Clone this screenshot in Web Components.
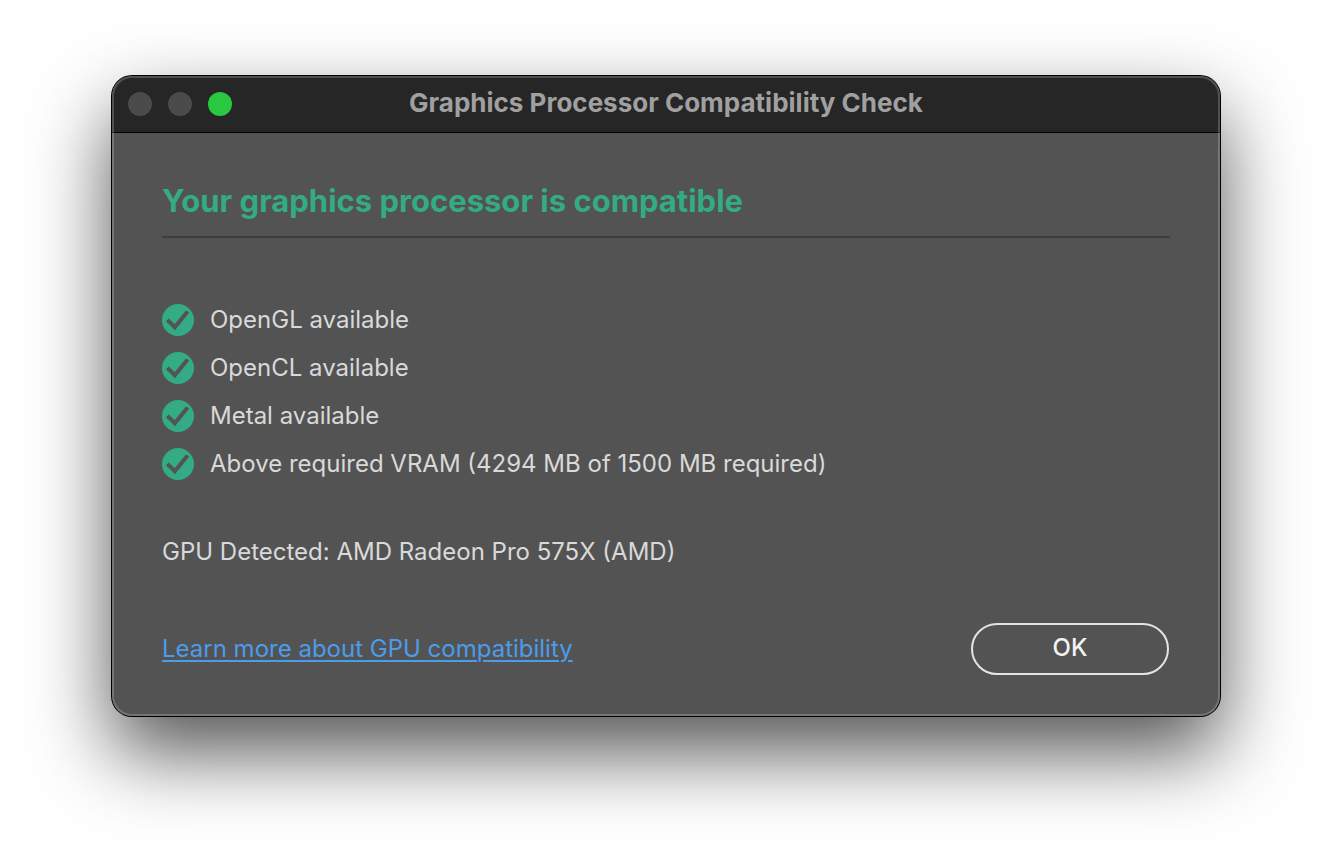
<!DOCTYPE html>
<html lang="en">
<head>
<meta charset="utf-8">
<meta name="viewport" content="width=device-width, initial-scale=1">
<title>Graphics Processor Compatibility Check</title>
<style>
  * { box-sizing: border-box; }
  body {
    margin: 0;
    padding: 76px 112px 148px;
    background: #fff;
    font-family: Inter, "Liberation Sans", sans-serif;
    overflow-x: hidden;
  }
</style>
</head>
<body>

<dialog-window>
  <span slot="title">Graphics Processor Compatibility Check</span>
  <status-heading>Your graphics processor is compatible</status-heading>
  <check-list>
    <check-item>OpenGL available</check-item>
    <check-item>OpenCL available</check-item>
    <check-item>Metal available</check-item>
    <check-item>Above required VRAM (4294 MB of 1500 MB required)</check-item>
  </check-list>
  <gpu-info>GPU Detected: AMD Radeon Pro 575X (AMD)</gpu-info>
  <help-link slot="footer" href="#gpu">Learn more about GPU compatibility</help-link>
  <pill-button slot="footer">OK</pill-button>
</dialog-window>

<script>
// Shared base: stamps the static template of the class into an open shadow root
class BaseElement extends HTMLElement {
  constructor() {
    super();
    this.attachShadow({ mode: 'open' }).innerHTML = this.constructor.template;
  }
}

class DialogWindow extends BaseElement {
  static template = `
    <style>
      :host {
        display: block;
        position: relative;
        border-radius: 20px;
        background: #535353;
        color: #d9d9d9;
        box-shadow: 0 0 0 1px #000, 0 36px 80px rgba(0, 0, 0, 0.68);
      }
      /* light rim, drawn above the title bar and the body */
      :host::after {
        content: '';
        position: absolute;
        inset: 0;
        border-radius: inherit;
        box-shadow: inset 0 0 0 2px rgba(255, 255, 255, 0.2);
        pointer-events: none;
      }
      header {
        display: grid;
        grid-template-columns: 1fr auto 1fr;
        align-items: center;
        height: 57px;
        padding: 0 16px;
        border-bottom: 1px solid #000;
        border-radius: 20px 20px 0 0;
        background: #262626;
        box-sizing: border-box;
      }
      h1 {
        margin: 0;
        padding-bottom: 2px;
        color: #a0a0a0;
        font-size: 26px;
        line-height: 32px;
        font-weight: 700;
      }
      main { padding: 48px 50px 0; }
      footer {
        display: flex;
        align-items: center;
        justify-content: space-between;
        padding: 55px 51px 41px 50px;
      }
    </style>
    <header>
      <traffic-lights></traffic-lights>
      <h1><slot name="title"></slot></h1>
    </header>
    <main><slot></slot></main>
    <footer><slot name="footer"></slot></footer>
  `;
}

class TrafficLights extends BaseElement {
  static template = `
    <style>
      :host { display: flex; gap: 16px; }
      button {
        width: 24px;
        height: 24px;
        padding: 0;
        border: 0;
        border-radius: 50%;
        background: #4b4b4b;
      }
      .zoom { background: #28c840; }
    </style>
    <button type="button" aria-label="Close" disabled></button>
    <button type="button" aria-label="Minimize" disabled></button>
    <button type="button" class="zoom" aria-label="Zoom"></button>
  `;
}

class StatusHeading extends BaseElement {
  static template = `
    <style>
      :host { display: block; border-bottom: 2px solid #3e3e3e; }
      h2 {
        margin: 0;
        padding-bottom: 15px;
        color: #33ab84;
        font-size: 31px;
        line-height: 40px;
        font-weight: 700;
      }
    </style>
    <h2><slot></slot></h2>
  `;
}

class CheckList extends BaseElement {
  static template = `
    <style>
      :host { display: flex; flex-direction: column; gap: 16px; margin-top: 66px; }
    </style>
    <slot></slot>
  `;

  connectedCallback() { this.setAttribute('role', 'list'); }
}

class CheckItem extends BaseElement {
  static template = `
    <style>
      :host {
        display: flex;
        align-items: center;
        gap: 16px;
        font-size: 24px;
        line-height: 32px;
      }
      svg { flex: none; width: 32px; height: 32px; }
    </style>
    <svg viewBox="0 0 32 32" aria-hidden="true">
      <circle cx="16" cy="16" r="16" fill="#33ab84"/>
      <path d="M5.4 15.8 12.8 23.2 25.6 7.4" fill="none" stroke="#535353" stroke-width="4"/>
    </svg>
    <span><slot></slot></span>
  `;

  connectedCallback() { this.setAttribute('role', 'listitem'); }
}

class GpuInfo extends BaseElement {
  static template = `
    <style>
      :host { display: block; margin-top: 56px; font-size: 24px; line-height: 32px; }
      p { margin: 0; }
    </style>
    <p><slot></slot></p>
  `;
}

class HelpLink extends BaseElement {
  static template = `
    <style>
      :host { display: block; font-size: 24px; line-height: 32px; }
      a {
        color: #4b9cea;
        text-decoration-thickness: 2px;
        text-underline-offset: 3px;
      }
    </style>
    <a><slot></slot></a>
  `;

  connectedCallback() {
    this.shadowRoot.querySelector('a').href = this.getAttribute('href');
  }
}

class PillButton extends BaseElement {
  static template = `
    <style>
      :host { display: block; }
      button {
        width: 198px;
        height: 52px;
        padding: 0 0 2px;
        border: 2px solid #e4e4e4;
        border-radius: 26px;
        background: transparent;
        color: #f2f2f2;
        font: 500 24px/32px Inter, "Liberation Sans", sans-serif;
      }
    </style>
    <button type="button"><slot></slot></button>
  `;
}

customElements.define('dialog-window', DialogWindow);
customElements.define('traffic-lights', TrafficLights);
customElements.define('status-heading', StatusHeading);
customElements.define('check-list', CheckList);
customElements.define('check-item', CheckItem);
customElements.define('gpu-info', GpuInfo);
customElements.define('help-link', HelpLink);
customElements.define('pill-button', PillButton);
</script>
</body>
</html>
